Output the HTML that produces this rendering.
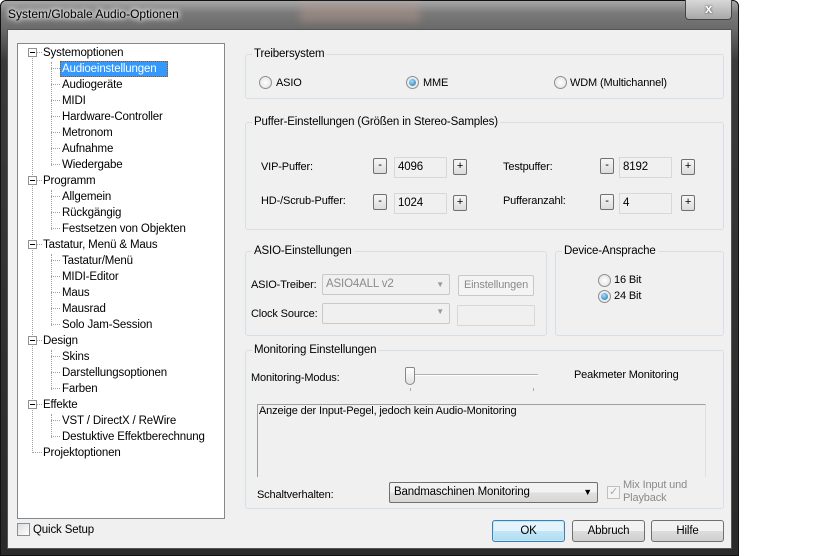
<!DOCTYPE html>
<html><head><meta charset="utf-8"><style>
*{box-sizing:border-box;margin:0;padding:0}
body{width:819px;height:556px;background:#fff;position:relative;overflow:hidden;font-family:"Liberation Sans",sans-serif;font-size:11px;letter-spacing:-0.15px;color:#000}
.a{position:absolute}
#frame{left:0;top:0;width:739px;height:556px;background:linear-gradient(#a8a8a8,#7a7a7a 12px,#6a6a6a 28px,#3a3a3a 60px,#2a2a2a);border:1px solid #111;border-radius:6px 6px 0 0}
#client{left:7px;top:29px;width:725px;height:520px;background:#f0f0f0;border:1px solid #555}
.t{position:absolute;white-space:nowrap;line-height:16px}
.tree{left:17px;top:43px;width:208px;height:476px;background:#fff;border:1px solid #828790}
.vl{position:absolute;width:1px;border-left:1px dotted #a0a0a0}
.hl{position:absolute;height:1px;border-top:1px dotted #a0a0a0}
.ex{position:absolute;width:9px;height:9px;border:1px solid #919191;background:#fff}
.ex:after{content:"";position:absolute;left:1px;top:3px;width:5px;height:1px;background:#000}
.gb{position:absolute;border:1px solid #d5dfe5;border-radius:3px}
.gt{position:absolute;background:#f0f0f0;padding:0 2px;line-height:14px;top:-8px;left:6px;white-space:nowrap;font-size:11.5px}
.rad{position:absolute;width:13px;height:13px;border-radius:50%;border:1px solid #8e8f8f;background:radial-gradient(#fff,#ddd)}
.rad.on:after{content:"";position:absolute;left:2px;top:2px;width:7px;height:7px;border-radius:50%;background:radial-gradient(circle at 40% 35%,#9fe0ff,#1a6ea8)}
.sb{position:absolute;width:14px;height:16px;border:1px solid #707070;border-radius:2px;background:linear-gradient(#f6f6f6,#dcdcdc);font-size:11px;line-height:13px;text-align:center}
.fld{position:absolute;width:53px;height:21px;border:1px solid #d8d8d8;background:#f0f0f0;padding-left:3px;line-height:19px;font-size:11.5px}
.btn{position:absolute;height:22px;border:1px solid #707070;border-radius:3px;background:linear-gradient(#f2f2f2 50%,#dddddd 50%,#cfcfcf);text-align:center;line-height:20px;font-size:11.5px}
</style></head><body>
<div id="frame" class="a"></div>
<div class="a" style="left:300px;top:4px;width:120px;height:18px;background:#c8a090;opacity:.35;filter:blur(4px)"></div>
<div class="a t" style="left:8px;top:6px;font-size:12px;letter-spacing:0;color:#000;text-shadow:0 0 8px #fff,0 0 6px #fff,0 0 4px #fff">System/Globale Audio-Optionen</div>
<div class="a" style="left:685px;top:0;width:47px;height:20px;border:1px solid #444;border-top:none;border-radius:0 0 4px 4px;background:linear-gradient(#d8d8d8,#a8a8a8);color:#fff;text-align:center;font-weight:bold;font-size:13px;line-height:18px;text-shadow:0 0 2px #333">x</div>
<div id="client" class="a"></div>

<div class="a tree">
<div class="vl" style="left:14px;top:9px;height:400px"></div>
<div class="vl" style="left:33px;top:18px;height:104px"></div>
<div class="vl" style="left:33px;top:146px;height:40px"></div>
<div class="vl" style="left:33px;top:210px;height:72px"></div>
<div class="vl" style="left:33px;top:306px;height:40px"></div>
<div class="vl" style="left:33px;top:370px;height:24px"></div>
</div>
<div class="a" style="left:17px;top:43px;width:208px;height:476px;font-size:11.5px">
<div class="ex" style="left:11px;top:5px"></div><div class="hl" style="left:20px;top:9px;width:5px"></div>
<div class="ex" style="left:11px;top:133px"></div><div class="hl" style="left:20px;top:137px;width:5px"></div>
<div class="ex" style="left:11px;top:197px"></div><div class="hl" style="left:20px;top:201px;width:5px"></div>
<div class="ex" style="left:11px;top:293px"></div><div class="hl" style="left:20px;top:297px;width:5px"></div>
<div class="ex" style="left:11px;top:357px"></div><div class="hl" style="left:20px;top:361px;width:5px"></div>
<div class="hl" style="left:15px;top:409px;width:10px"></div>
<div class="hl" style="left:34px;top:25px;width:9px"></div><div class="hl" style="left:34px;top:41px;width:9px"></div><div class="hl" style="left:34px;top:57px;width:9px"></div><div class="hl" style="left:34px;top:73px;width:9px"></div><div class="hl" style="left:34px;top:89px;width:9px"></div><div class="hl" style="left:34px;top:105px;width:9px"></div><div class="hl" style="left:34px;top:121px;width:9px"></div>
<div class="hl" style="left:34px;top:153px;width:9px"></div><div class="hl" style="left:34px;top:169px;width:9px"></div><div class="hl" style="left:34px;top:185px;width:9px"></div>
<div class="hl" style="left:34px;top:217px;width:9px"></div><div class="hl" style="left:34px;top:233px;width:9px"></div><div class="hl" style="left:34px;top:249px;width:9px"></div><div class="hl" style="left:34px;top:265px;width:9px"></div><div class="hl" style="left:34px;top:281px;width:9px"></div>
<div class="hl" style="left:34px;top:313px;width:9px"></div><div class="hl" style="left:34px;top:329px;width:9px"></div><div class="hl" style="left:34px;top:345px;width:9px"></div>
<div class="hl" style="left:34px;top:377px;width:9px"></div><div class="hl" style="left:34px;top:393px;width:9px"></div>
<div class="a" style="left:43px;top:18px;width:108px;height:16px;background:#3399ff;border:1px dotted #b05000"></div>
<div class="t" style="left:26px;top:2px">Systemoptionen</div>
<div class="t" style="left:45px;top:18px;color:#fff">Audioeinstellungen</div>
<div class="t" style="left:45px;top:34px">Audiogeräte</div>
<div class="t" style="left:45px;top:50px">MIDI</div>
<div class="t" style="left:45px;top:66px">Hardware-Controller</div>
<div class="t" style="left:45px;top:82px">Metronom</div>
<div class="t" style="left:45px;top:98px">Aufnahme</div>
<div class="t" style="left:45px;top:114px">Wiedergabe</div>
<div class="t" style="left:26px;top:130px">Programm</div>
<div class="t" style="left:45px;top:146px">Allgemein</div>
<div class="t" style="left:45px;top:162px">Rückgängig</div>
<div class="t" style="left:45px;top:178px">Festsetzen von Objekten</div>
<div class="t" style="left:26px;top:194px">Tastatur, Menü &amp; Maus</div>
<div class="t" style="left:45px;top:210px">Tastatur/Menü</div>
<div class="t" style="left:45px;top:226px">MIDI-Editor</div>
<div class="t" style="left:45px;top:242px">Maus</div>
<div class="t" style="left:45px;top:258px">Mausrad</div>
<div class="t" style="left:45px;top:274px">Solo Jam-Session</div>
<div class="t" style="left:26px;top:290px">Design</div>
<div class="t" style="left:45px;top:306px">Skins</div>
<div class="t" style="left:45px;top:322px">Darstellungsoptionen</div>
<div class="t" style="left:45px;top:338px">Farben</div>
<div class="t" style="left:26px;top:354px">Effekte</div>
<div class="t" style="left:45px;top:370px">VST / DirectX / ReWire</div>
<div class="t" style="left:45px;top:386px">Destuktive Effektberechnung</div>
<div class="t" style="left:26px;top:402px">Projektoptionen</div>
</div>

<div class="a" style="left:17px;top:523px;width:13px;height:13px;border:1px solid #8e8f8f;background:linear-gradient(135deg,#ddd,#fff)"></div>
<div class="t" style="left:33px;top:522px;font-size:11.5px">Quick Setup</div>

<!-- Treibersystem -->
<div class="gb" style="left:245px;top:54px;width:479px;height:45px"><div class="gt">Treibersystem</div></div>
<div class="rad" style="left:259px;top:76px"></div><div class="t" style="left:276px;top:75px">ASIO</div>
<div class="rad on" style="left:406px;top:76px"></div><div class="t" style="left:423px;top:75px">MME</div>
<div class="rad" style="left:554px;top:76px"></div><div class="t" style="left:570px;top:75px">WDM (Multichannel)</div>

<!-- Puffer -->
<div class="gb" style="left:245px;top:122px;width:479px;height:108px"><div class="gt">Puffer-Einstellungen (Größen in Stereo-Samples)</div></div>
<div class="t" style="left:261px;top:159px">VIP-Puffer:</div>
<div class="sb" style="left:373px;top:158px">-</div><div class="fld" style="left:394px;top:157px">4096</div><div class="sb" style="left:453px;top:159px">+</div>
<div class="t" style="left:503px;top:159px">Testpuffer:</div>
<div class="sb" style="left:600px;top:158px">-</div><div class="fld" style="left:619px;top:157px">8192</div><div class="sb" style="left:681px;top:159px">+</div>
<div class="t" style="left:261px;top:193px">HD-/Scrub-Puffer:</div>
<div class="sb" style="left:373px;top:194px">-</div><div class="fld" style="left:394px;top:193px">1024</div><div class="sb" style="left:453px;top:195px">+</div>
<div class="t" style="left:503px;top:193px">Pufferanzahl:</div>
<div class="sb" style="left:600px;top:194px">-</div><div class="fld" style="left:619px;top:193px">4</div><div class="sb" style="left:681px;top:195px">+</div>

<!-- ASIO -->
<div class="gb" style="left:245px;top:251px;width:302px;height:85px"><div class="gt">ASIO-Einstellungen</div></div>
<div class="t" style="left:251px;top:277px">ASIO-Treiber:</div>
<div class="a" style="left:322px;top:274px;width:128px;height:21px;border:1px solid #c8c8c8;border-radius:2px;background:#f0f0f0;color:#8a8a8a;padding-left:3px;line-height:19px;font-size:11.5px">ASIO4ALL v2<span style="position:absolute;right:5px;top:0;font-size:8px;color:#999">▼</span></div>
<div class="a" style="left:458px;top:275px;width:76px;height:21px;border:1px solid #c8c8c8;border-radius:2px;background:#f4f4f4;color:#8a8a8a;text-align:center;line-height:19px">Einstellungen</div>
<div class="t" style="left:251px;top:306px">Clock Source:</div>
<div class="a" style="left:322px;top:303px;width:128px;height:21px;border:1px solid #c8c8c8;border-radius:2px;background:#f0f0f0"><span style="position:absolute;right:5px;top:3px;font-size:8px;color:#999">▼</span></div>
<div class="a" style="left:457px;top:305px;width:78px;height:21px;border:1px solid #d8d8d8;background:#f0f0f0"></div>

<!-- Device -->
<div class="gb" style="left:555px;top:251px;width:169px;height:85px"><div class="gt">Device-Ansprache</div></div>
<div class="rad" style="left:598px;top:274px"></div><div class="t" style="left:614px;top:272px">16 Bit</div>
<div class="rad on" style="left:598px;top:290px"></div><div class="t" style="left:614px;top:288px">24 Bit</div>

<!-- Monitoring -->
<div class="gb" style="left:245px;top:350px;width:479px;height:159px"><div class="gt">Monitoring Einstellungen</div></div>
<div class="t" style="left:251px;top:370px">Monitoring-Modus:</div>
<div class="a" style="left:405px;top:374px;width:133px;height:2px;border-top:1px solid #b0b0b0;border-bottom:1px solid #fff"></div>
<div class="a" style="left:405px;top:367px;width:10px;height:18px;border:1px solid #888;border-radius:2px 2px 5px 5px;background:linear-gradient(#fff,#e2e2e2)"></div>
<div class="a" style="left:410px;top:388px;width:1px;height:3px;background:#aaa"></div>
<div class="a" style="left:533px;top:388px;width:1px;height:3px;background:#aaa"></div>
<div class="t" style="left:574px;top:367px">Peakmeter Monitoring</div>
<div class="a" style="left:257px;top:404px;width:449px;height:73px;border:1px solid #a0a0a0;border-bottom:none;border-right-color:#e0e0e0;background:#f0f0f0"></div>
<div class="t" style="left:259px;top:403px">Anzeige der Input-Pegel, jedoch kein Audio-Monitoring</div>
<div class="t" style="left:257px;top:487px">Schaltverhalten:</div>
<div class="a" style="left:389px;top:482px;width:209px;height:21px;border:1px solid #707070;border-radius:2px;background:linear-gradient(#f2f2f2 50%,#e0e0e0 50%,#d6d6d6);padding-left:4px;line-height:19px;font-size:11.5px">Bandmaschinen Monitoring<span style="position:absolute;right:5px;top:0;font-size:9px">▼</span></div>
<div class="a" style="left:607px;top:486px;width:13px;height:13px;border:1px solid #c0c0c0;background:#f4f4f4;color:#aaa;font-size:11px;line-height:11px;text-align:center">✓</div>
<div class="t" style="left:623px;top:479px;color:#8a8a8a;line-height:13px">Mix Input und<br>Playback</div>

<!-- Buttons -->
<div class="btn" style="left:492px;top:520px;width:73px;border-color:#3c7fb1;background:linear-gradient(#e5f4fc 50%,#c4e5f6 50%,#aedcf2);box-shadow:inset 0 0 0 1px #c0e8ff">OK</div>
<div class="btn" style="left:572px;top:520px;width:73px">Abbruch</div>
<div class="btn" style="left:651px;top:520px;width:73px">Hilfe</div>
</body></html>
